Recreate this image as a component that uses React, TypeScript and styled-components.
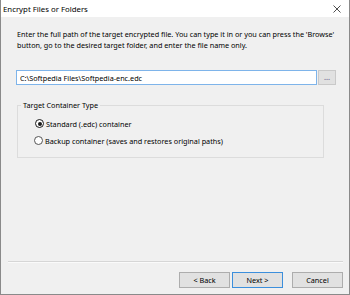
import React, { useState } from 'react';
import styled, { createGlobalStyle } from 'styled-components';

const GlobalStyle = createGlobalStyle`
  html, body {
    margin: 0;
    padding: 0;
    background: #f0f0f0;
  }
  body {
    font-family: 'Noto Sans', 'Open Sans', sans-serif;
    font-size: 7.25px;
    color: #000;
  }
`;

const Window = styled.div`
  width: 350px;
  height: 295px;
  box-sizing: border-box;
  display: flex;
  flex-direction: column;
  background: #f0f0f0;
  border: 1px solid #8a8a8a;
  border-top: none;
`;

const TitleBar = styled.div`
  height: 17px;
  background: #ffffff;
  display: flex;
  align-items: center;
  justify-content: space-between;
  padding: 0 8px 0 2px;
  font-size: 7.8px;
`;

const CloseGlyph = styled.svg`
  width: 8px;
  height: 8px;
`;

const Content = styled.div`
  flex: 1;
  display: flex;
  flex-direction: column;
  padding: 0 12px 0 15px;
`;

const Intro = styled.p`
  margin: 12px 0 0 1px;
  line-height: 11px;
`;

const PathRow = styled.div`
  display: flex;
  align-items: stretch;
  gap: 1px;
  margin-top: 19px;
  height: 15px;
  margin-right: 1px;
`;

const PathInput = styled.input`
  flex: 1;
  min-width: 0;
  box-sizing: border-box;
  height: 15px;
  margin: 0;
  padding: 0 3px;
  border: 1px solid #7eb4ea;
  background: #fff;
  font: inherit;
  outline: none;
`;

const BrowseButton = styled.button`
  width: 18px;
  box-sizing: border-box;
  margin: 0;
  padding: 0;
  border: 1px solid #c9c9c9;
  background: #e1e1e1;
  color: #7a7a9a;
  font: inherit;
  font-weight: bold;
  line-height: 1;
`;

const Group = styled.fieldset`
  margin: 15px 13px 0 1px;
  padding: 0 0 8px 3px;
  border: 1px solid #dcdcdc;
  min-width: 0;
`;

const GroupLabel = styled.legend`
  padding: 0 2px;
  line-height: 11px;
`;

const OptionRow = styled.label<{ $first?: boolean }>`
  display: flex;
  align-items: center;
  height: 17px;
  padding-left: ${(p) => (p.$first ? '14px' : '13px')};
  margin-top: ${(p) => (p.$first ? '4px' : '0')};
  gap: 2px;
`;

const RadioDot = styled.span<{ $checked: boolean }>`
  width: 9px;
  height: 9px;
  box-sizing: border-box;
  border-radius: 50%;
  border: 1px solid ${(p) => (p.$checked ? '#1a1a1a' : '#555')};
  background: #fff;
  display: flex;
  align-items: center;
  justify-content: center;

  &::after {
    content: '';
    width: 4px;
    height: 4px;
    border-radius: 50%;
    background: ${(p) => (p.$checked ? '#1a1a1a' : 'transparent')};
  }
`;

const Footer = styled.div`
  margin-top: auto;
  display: flex;
  flex-direction: column;
  padding: 0 6px 6px 7px;
`;

const Separator = styled.div`
  height: 1px;
  background: #d6d6d6;
  border-bottom: 1px solid #fafafa;
`;

const ButtonRow = styled.div`
  display: flex;
  justify-content: flex-end;
  margin-top: 9px;
`;

const DialogButton = styled.button<{ $default?: boolean; $gapLeft?: number }>`
  width: 51px;
  height: 16px;
  box-sizing: border-box;
  margin: 0 0 0 ${(p) => p.$gapLeft ?? 0}px;
  padding: 0;
  font: inherit;
  color: #000;
  background: #e1e1e1;
  border: 1px solid ${(p) => (p.$default ? '#3c8fdc' : '#adadad')};
`;

const options = [
  { id: 'standard', label: 'Standard (.edc) container' },
  { id: 'backup', label: 'Backup container (saves and restores original paths)' },
];

const App: React.FC = function () {
  const [selected, setSelected] = useState('standard');

  return (
    <>
      <GlobalStyle />
      <Window>
        <TitleBar>
          <span>Encrypt Files or Folders</span>
          <CloseGlyph viewBox="0 0 8 8">
            <path d="M0.5 0.5 L7.5 7.5 M7.5 0.5 L0.5 7.5" stroke="#222" strokeWidth="0.8" />
          </CloseGlyph>
        </TitleBar>
        <Content>
          <Intro>
            Enter the full path of the target encrypted file. You can type it in or you can press the
            'Browse' button, go to the desired target folder, and enter the file name only.
          </Intro>
          <PathRow>
            <PathInput defaultValue="C:\Softpedia Files\Softpedia-enc.edc" />
            <BrowseButton>...</BrowseButton>
          </PathRow>
          <Group>
            <GroupLabel>Target Container Type</GroupLabel>
            {options.map((o, i) => (
              <OptionRow key={o.id} $first={i === 0} onClick={() => setSelected(o.id)}>
                <RadioDot $checked={selected === o.id} />
                <span>{o.label}</span>
              </OptionRow>
            ))}
          </Group>
        </Content>
        <Footer>
          <Separator />
          <ButtonRow>
            <DialogButton>&lt; Back</DialogButton>
            <DialogButton $default $gapLeft={2}>
              Next &gt;
            </DialogButton>
            <DialogButton $gapLeft={9}>Cancel</DialogButton>
          </ButtonRow>
        </Footer>
      </Window>
    </>
  );
};

export default App;
